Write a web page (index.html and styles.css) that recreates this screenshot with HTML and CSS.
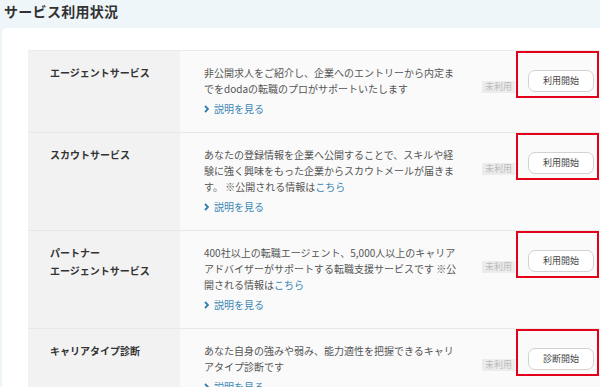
FILE: index.html
```html
<!DOCTYPE html>
<html>
  <head>
    <title>サービス利用状況</title>
    <link rel="stylesheet" href="styles.css">
  </head>
  <body>
    <h1 class="page-title">サービス利用状況</h1>

    <div class="card">
      <div class="service-table">
        <div class="service-row">
          <div class="service-name">エージェントサービス</div>
          <div class="service-body">
            <p class="service-desc">非公開求人をご紹介し、企業へのエントリーから内定までをdodaの転職のプロがサポートいたします</p>
            <a class="more-link" href="#"><svg class="chevron" viewBox="0 0 5 8"><path d="M1 1 L4 4 L1 7"/></svg>説明を見る</a>
          </div>
          <div class="service-status"><span class="status-badge">未利用</span></div>
          <div class="service-action">
            <button class="start-button">利用開始</button>
            <span class="mark"></span>
          </div>
        </div>

        <div class="service-row">
          <div class="service-name">スカウトサービス</div>
          <div class="service-body">
            <p class="service-desc">あなたの登録情報を企業へ公開することで、スキルや経験に強く興味をもった企業からスカウトメールが届きます。 ※公開される情報は<a href="#">こちら</a></p>
            <a class="more-link" href="#"><svg class="chevron" viewBox="0 0 5 8"><path d="M1 1 L4 4 L1 7"/></svg>説明を見る</a>
          </div>
          <div class="service-status"><span class="status-badge">未利用</span></div>
          <div class="service-action">
            <button class="start-button">利用開始</button>
            <span class="mark"></span>
          </div>
        </div>

        <div class="service-row">
          <div class="service-name">パートナー<br>エージェントサービス</div>
          <div class="service-body">
            <p class="service-desc">400社以上の転職エージェント、5,000人以上のキャリアアドバイザーがサポートする転職支援サービスです ※公開される情報は<a href="#">こちら</a></p>
            <a class="more-link" href="#"><svg class="chevron" viewBox="0 0 5 8"><path d="M1 1 L4 4 L1 7"/></svg>説明を見る</a>
          </div>
          <div class="service-status"><span class="status-badge">未利用</span></div>
          <div class="service-action">
            <button class="start-button">利用開始</button>
            <span class="mark"></span>
          </div>
        </div>

        <div class="service-row">
          <div class="service-name">キャリアタイプ診断</div>
          <div class="service-body">
            <p class="service-desc">あなた自身の強みや弱み、能力適性を把握できるキャリアタイプ診断です</p>
            <a class="more-link" href="#"><svg class="chevron" viewBox="0 0 5 8"><path d="M1 1 L4 4 L1 7"/></svg>説明を見る</a>
          </div>
          <div class="service-status"><span class="status-badge">未利用</span></div>
          <div class="service-action">
            <button class="start-button">診断開始</button>
            <span class="mark"></span>
          </div>
        </div>
      </div>
    </div>
  </body>
</html>
```

FILE: styles.css
```css
body {
  margin: 0;
  background-color: #eef6fa;
  font-family: "Noto Sans CJK JP", "Noto Sans", sans-serif;
  color: #333;
  overflow: hidden;
}
.page-title {
  margin: 0;
  padding: 1px 0 0 4px;
  height: 27px;
  font-size: 14px;
  line-height: 20px;
  font-weight: bold;
  letter-spacing: 0.3px;
  color: #333;
}
.card {
  margin-left: 2px;
  padding: 22px 0 0 26px;
  background-color: white;
  border-radius: 4px 0 0 0;
  box-shadow: 0 0 2px rgba(0, 0, 0, 0.06);
  min-height: 400px;
}
.service-table {
  border-top: 1px solid #ebebeb;
}
.service-row {
  display: flex;
  border-bottom: 1px solid #e8e8e8;
  background-color: #fafafa;
}
.service-name {
  width: 130px;
  flex-shrink: 0;
  padding: 13px 0 0 22px;
  background-color: #f2f2f2;
  font-size: 10px;
  line-height: 18px;
  font-weight: bold;
  color: #333;
}
.service-body {
  width: 256px;
  flex-shrink: 0;
  padding: 14px 10px 15px 24px;
}
.service-desc {
  margin: 0;
  font-size: 10px;
  line-height: 16px;
  color: #555;
}
.service-desc a {
  color: #3b87b4;
  text-decoration: none;
}
.more-link {
  display: flex;
  align-items: center;
  gap: 5px;
  margin-top: 4px;
  font-size: 10px;
  line-height: 16px;
  color: #3b87b4;
  text-decoration: none;
}
.chevron {
  width: 5px;
  height: 8px;
  fill: none;
  stroke: #2f7fae;
  stroke-width: 1.8;
}
.service-status {
  width: 34px;
  flex-shrink: 0;
  padding: 20px 0 0 12px;
}
.status-badge {
  display: inline-block;
  padding: 0 3px;
  background-color: #ececec;
  color: #bbb;
  font-size: 9px;
  line-height: 12px;
}
.service-action {
  position: relative;
  flex-grow: 1;
  padding: 14px 0 0 12px;
}
.start-button {
  width: 66px;
  height: 22px;
  padding: 0;
  border: 1px solid #d2d2d2;
  border-radius: 7px;
  background-color: white;
  color: #444;
  font-family: inherit;
  font-size: 9px;
  cursor: pointer;
}
.mark {
  position: absolute;
  top: 0;
  left: 0;
  width: 83px;
  height: 47px;
  box-sizing: border-box;
  border: 2px solid #e3001b;
}
```
